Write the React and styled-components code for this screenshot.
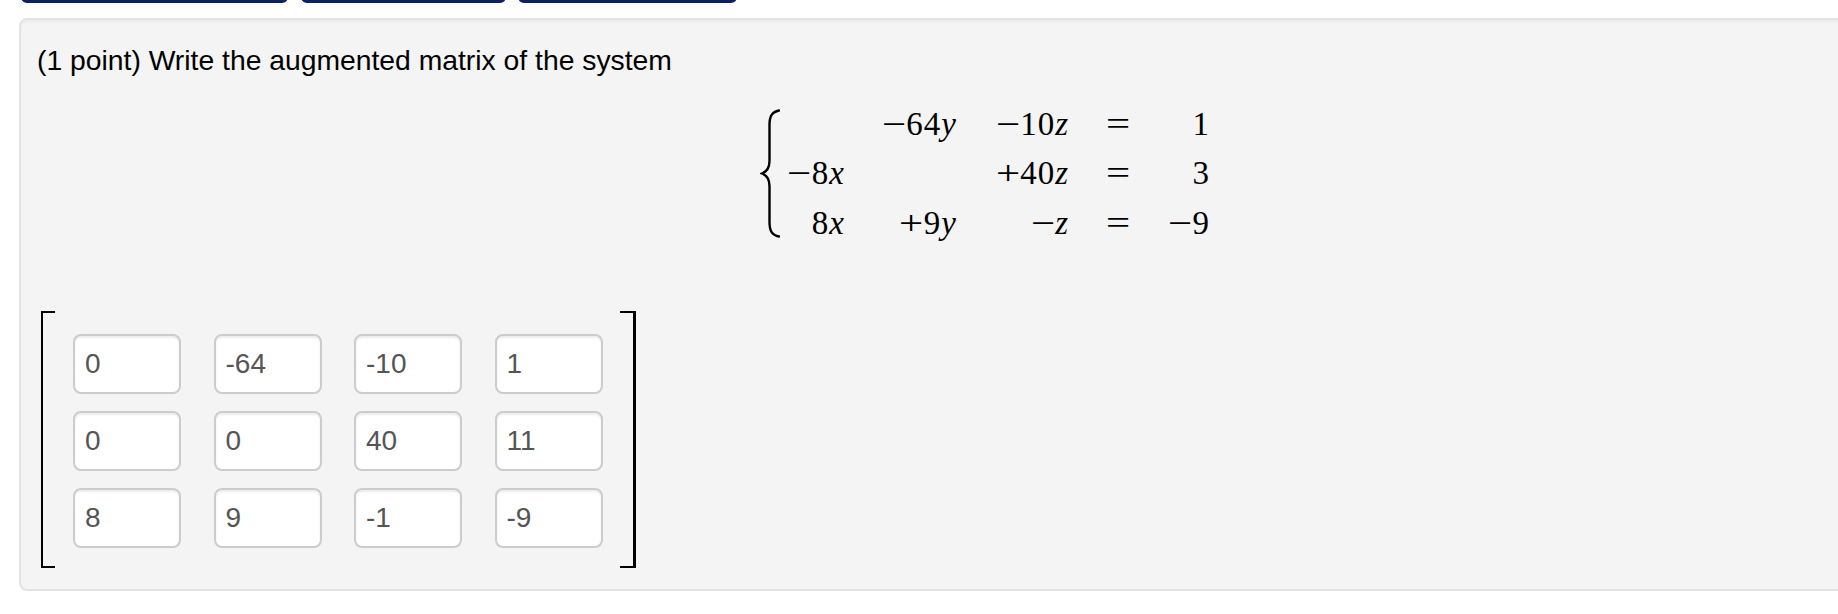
import React from 'react';
import styled, { createGlobalStyle } from 'styled-components';

const GlobalStyle = createGlobalStyle`
  html, body {
    margin: 0;
    padding: 0;
    background: #fff;
  }
  body {
    font-family: "Liberation Sans", Arial, Helvetica, sans-serif;
    color: #000;
    overflow: hidden;
  }
`;

const Page = styled.div`
  padding-left: 19px;
  overflow: hidden;
`;

const Toolbar = styled.div`
  display: flex;
  align-items: flex-end;
  gap: 12.5px;
  height: 3px;
  padding-left: 2px;
  overflow: hidden;
`;

const NavButton = styled.button`
  flex: none;
  width: ${props => props.w}px;
  height: 40px;
  border: none;
  border-radius: 6px;
  background: #0b2163;
  padding: 0;
`;

const Panel = styled.div`
  margin: 15px -12px 0 0;
  background: #f4f4f4;
  border: 2px solid #e3e3e3;
  border-radius: 8px;
  box-shadow: inset 0 2px 3px rgba(0, 0, 0, 0.04);
  padding: 20px 0 21px 16px;
`;

const Title = styled.p`
  margin: 0;
  font-size: 28.3px;
  line-height: 40px;
`;

const System = styled.div`
  display: flex;
  align-items: center;
  gap: 5px;
  margin: 19.5px 0 0 723px;
  font-family: "Liberation Serif", "Times New Roman", serif;
  font-size: 33px;
  letter-spacing: 1px;
`;

const Equations = styled.div`
  display: grid;
  grid-template-columns: 60px 112px 112px 99px 42px;
  grid-auto-rows: 49.5px;
  line-height: 49.5px;
`;

const Cell = styled.span`
  text-align: ${props => (props.center ? 'center' : 'right')};
  white-space: nowrap;
`;

const Sign = styled.span`
  display: inline-block;
  margin-right: 2px;
  transform: scaleX(1.3);
`;

const Equals = styled.span`
  display: inline-block;
  transform: scaleX(1.3);
`;

const Var = styled.i`
  font-style: italic;
`;

const Matrix = styled.div`
  display: flex;
  margin: 63px 0 0 4px;
`;

const Bracket = styled.div`
  flex: none;
  width: 12px;
  border-style: solid;
  border-color: #000;
  border-width: 2px 0 2px 2px;
  ${props => props.right && `
    width: 13px;
    border-width: 2px 3px 2px 0;
  `}
`;

const Cells = styled.div`
  display: grid;
  grid-template-columns: repeat(4, 108px);
  column-gap: 32.5px;
  row-gap: 17px;
  padding: 23px 0 20px;
  margin: 0 17.5px 0 18px;
`;

const Entry = styled.input`
  box-sizing: border-box;
  width: 108px;
  height: 60px;
  margin: 0;
  padding: 0 10px;
  border: 2px solid #cccccc;
  border-radius: 8px;
  background: #fff;
  box-shadow: inset 0 2px 2px rgba(0, 0, 0, 0.075);
  font-family: "Liberation Sans", Arial, Helvetica, sans-serif;
  font-size: 28px;
  color: #555;
  outline: none;
`;

const rows = [
  [null, { s: '−', c: '64', v: 'y' }, { s: '−', c: '10', v: 'z' }, '1'],
  [{ s: '−', c: '8', v: 'x' }, null, { s: '+', c: '40', v: 'z' }, '3'],
  [{ s: '', c: '8', v: 'x' }, { s: '+', c: '9', v: 'y' }, { s: '−', c: '', v: 'z' }, '−9'],
];

const answers = [
  ['0', '-64', '-10', '1'],
  ['0', '0', '40', '11'],
  ['8', '9', '-1', '-9'],
];

function Term({ t }) {
  if (!t) return <Cell />;
  return (
    <Cell>
      {t.s && <Sign>{t.s}</Sign>}
      {t.c}
      <Var>{t.v}</Var>
    </Cell>
  );
}

function Constant({ value }) {
  const neg = value.startsWith('−');
  return (
    <Cell>
      {neg && <Sign>−</Sign>}
      {neg ? value.slice(1) : value}
    </Cell>
  );
}

function Brace() {
  return (
    <svg width="20" height="129" viewBox="0 0 20 129" aria-hidden="true">
      <path
        d="M19 1.5 C12 3 9.5 7 9.5 16 L9.5 52 C9.5 59 7 62.5 2 64.5 C7 66.5 9.5 70 9.5 77 L9.5 113 C9.5 122 12 126 19 127.5"
        fill="none"
        stroke="#000"
        strokeWidth="2.4"
        strokeLinecap="round"
      />
    </svg>
  );
}

export default function App() {
  return (
    <Page>
      <GlobalStyle />
      <Toolbar>
        <NavButton w={267} aria-label="Preview My Answers" />
        <NavButton w={205} aria-label="Check Answers" />
        <NavButton w={219} aria-label="Submit Answers" />
      </Toolbar>
      <Panel>
        <Title>(1 point) Write the augmented matrix of the system</Title>
        <System>
          <Brace />
          <Equations>
            {rows.map((row, i) => (
              <React.Fragment key={i}>
                <Term t={row[0]} />
                <Term t={row[1]} />
                <Term t={row[2]} />
                <Cell center><Equals>=</Equals></Cell>
                <Constant value={row[3]} />
              </React.Fragment>
            ))}
          </Equations>
        </System>
        <Matrix>
          <Bracket />
          <Cells>
            {answers.flat().map((v, i) => (
              <Entry key={i} type="text" defaultValue={v} />
            ))}
          </Cells>
          <Bracket right />
        </Matrix>
      </Panel>
    </Page>
  );
}
